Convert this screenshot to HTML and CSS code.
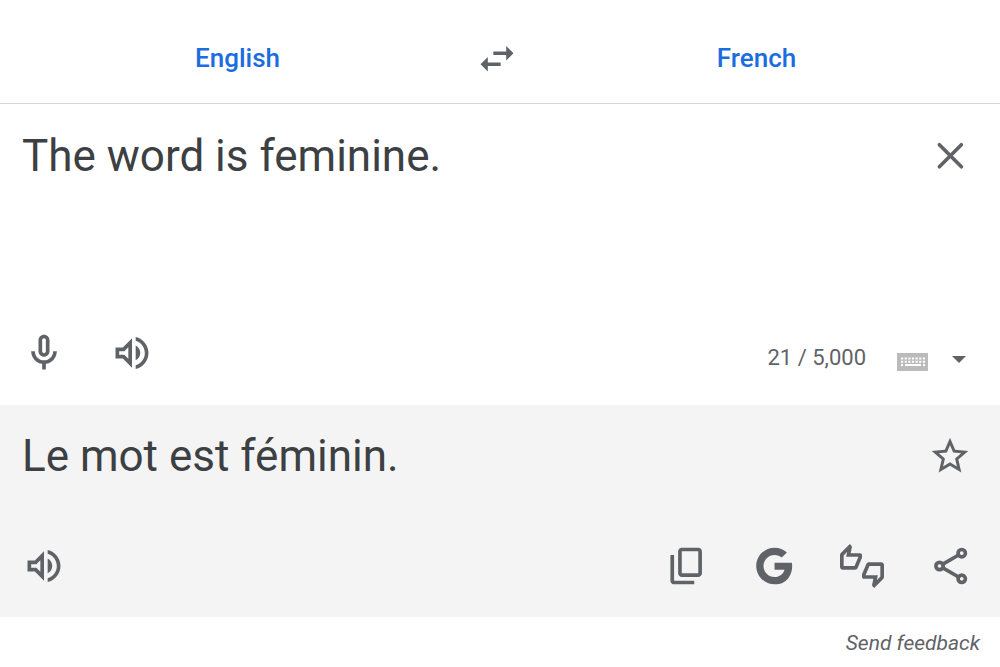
FILE: index.html
```html
<!DOCTYPE html>
<html lang="en">
<head>
  <meta charset="UTF-8">
  <meta name="viewport" content="width=device-width, initial-scale=1.0">
  <title>Translate</title>
  <link rel="stylesheet" href="styles.css">
</head>
<body>
  <header class="languages">
    <button class="language" type="button">English</button>
    <button class="icon-button" type="button" aria-label="Swap languages">
      <svg class="icon" viewBox="0 0 24 24"><path d="M6.99 11.4L3 15.4l3.99 4v-3H14v-2H6.99v-3zM21 9.4l-3.99-4v3H10v2h7.01v3L21 9.4z"/></svg>
    </button>
    <button class="language" type="button">French</button>
  </header>

  <main>
    <section class="panel source">
      <div class="text-row">
        <textarea class="text" rows="3" aria-label="Source text" spellcheck="false">The word is feminine.</textarea>
        <button class="icon-button" type="button" aria-label="Clear source text">
          <svg class="icon" viewBox="0 0 24 24"><path class="line" d="M6.2 5.9l12 12M18.2 5.9l-12 12"/></svg>
        </button>
      </div>
      <div class="tools">
        <button class="icon-button" type="button" aria-label="Translate by voice">
          <svg class="icon" viewBox="0 0 24 24"><path d="M12 14c1.66 0 3-1.34 3-3V5c0-1.66-1.34-3-3-3S9 3.34 9 5v6c0 1.66 1.34 3 3 3zm-1-9c0-.55.45-1 1-1s1 .45 1 1v6c0 .55-.45 1-1 1s-1-.45-1-1V5zm6 6c0 2.76-2.24 5-5 5s-5-2.24-5-5H5c0 3.53 2.61 6.43 6 6.92V21h2v-3.08c3.39-.49 6-3.39 6-6.92h-2z"/></svg>
        </button>
        <button class="icon-button" type="button" aria-label="Listen to source text">
          <svg class="icon" viewBox="0 0 24 24"><path d="M3 9v6h4l5 5V4L7 9H3zm7-.17v6.34L7.83 13H5v-2h2.83L10 8.83zM14 3.23v2.06c2.89.86 5 3.54 5 6.71s-2.11 5.85-5 6.71v2.06c4.01-.91 7-4.49 7-8.77s-2.99-7.86-7-8.77zM16.5 12c0-1.77-1.02-3.29-2.5-4.03v8.05c1.48-.73 2.5-2.25 2.5-4.02z"/></svg>
        </button>
        <div class="input-info">
          <span class="counter">21 / 5,000</span>
          <button class="keyboard" type="button" aria-label="Turn on virtual keyboard">
            <svg class="keyboard-icon" viewBox="0 0 31 18">
              <path class="keyboard-case" d="M0 0h31v18H0z"/>
              <path class="keys" d="M4 5.5h24M4 8.7h24"/>
              <path class="space" d="M4 12h2M8 12h16M26 12h2"/>
            </svg>
          </button>
          <button class="keyboard-menu" type="button" aria-label="Select input tool">
            <svg class="arrow-icon" viewBox="0 0 14 7"><path d="M0 0h14L7 7z"/></svg>
          </button>
        </div>
      </div>
    </section>

    <section class="panel result">
      <div class="text-row">
        <p class="text" lang="fr">Le mot est féminin.</p>
        <button class="icon-button" type="button" aria-label="Save translation">
          <svg class="icon" viewBox="0 0 24 24"><path d="M22 9.24l-7.19-.62L12 2 9.19 8.63 2 9.24l5.46 4.73L5.82 21 12 17.27 18.18 21l-1.63-7.03L22 9.24zM12 15.4l-3.76 2.27 1-4.28-3.32-2.88 4.38-.38L12 6.1l1.71 4.04 4.38.38-3.32 2.88 1 4.28L12 15.4z"/></svg>
        </button>
      </div>
      <div class="tools">
        <button class="icon-button" type="button" aria-label="Listen to translation">
          <svg class="icon" viewBox="0 0 24 24"><path d="M3 9v6h4l5 5V4L7 9H3zm7-.17v6.34L7.83 13H5v-2h2.83L10 8.83zM14 3.23v2.06c2.89.86 5 3.54 5 6.71s-2.11 5.85-5 6.71v2.06c4.01-.91 7-4.49 7-8.77s-2.99-7.86-7-8.77zM16.5 12c0-1.77-1.02-3.29-2.5-4.03v8.05c1.48-.73 2.5-2.25 2.5-4.02z"/></svg>
        </button>
        <div class="actions">
          <button class="icon-button" type="button" aria-label="Copy translation">
            <svg class="icon" viewBox="0 0 24 24"><path d="M18.7 2H9.7c-1.1 0-2 .9-2 2v12c0 1.1.9 2 2 2h9c1.1 0 2-.9 2-2V4c0-1.1-.9-2-2-2zm0 14H9.7V4h9v12zM3.5 6v14c0 1.1.9 2 2 2h11v-2h-11V6h-2z"/></svg>
          </button>
          <button class="icon-button" type="button" aria-label="Search with Google">
            <svg class="icon" viewBox="0 0 24 24"><path d="M12.3 10.24v3.82h5.45c-.72 2.31-2.65 3.97-5.45 3.97-3.33 0-6.03-2.7-6.03-6.03s2.7-6.03 6.03-6.03c1.5 0 2.87.55 3.92 1.45l2.82-2.81C17.26 2.99 14.9 2 12.3 2 6.78 2 2.3 6.48 2.3 12s4.48 10 10 10c8.4 0 10.25-7.85 9.43-11.75z"/></svg>
          </button>
          <button class="icon-button" type="button" aria-label="Rate this translation">
            <svg class="icon" viewBox="0 0 24 24"><path d="M12 6c0-.55-.45-1-1-1H5.82l.66-3.18.02-.23c0-.31-.13-.59-.33-.8L5.38 0 .44 4.94C.17 5.21 0 5.59 0 6v6.5c0 .83.67 1.5 1.5 1.5h6.75c.62 0 1.15-.38 1.38-.91l2.26-5.29c.07-.17.11-.36.11-.55V6zm-2 1.13L7.92 12H2V6.21l1.93-1.93L3.36 7H10v.13zM22.5 10h-6.75c-.62 0-1.15.38-1.38.91l-2.26 5.29c-.07.17-.11.36-.11.55V18c0 .55.45 1 1 1h5.18l-.66 3.18-.02.24c0 .31.13.59.33.8l.79.78 4.94-4.94c.27-.27.44-.65.44-1.06v-6.5c0-.83-.67-1.5-1.5-1.5zm-.5 7.79l-1.93 1.93.57-2.72H14v-.13L16.08 12H22v5.79z"/></svg>
          </button>
          <button class="icon-button" type="button" aria-label="Share translation">
            <svg class="icon" viewBox="0 0 24 24"><path class="line" d="M8.1 11l8.6-5M8.1 13l8.6 5"/><g class="nodes"><circle cx="6.3" cy="12" r="2"/><circle cx="18.4" cy="5" r="2"/><circle cx="18.4" cy="19" r="2"/></g></svg>
          </button>
        </div>
      </div>
    </section>
  </main>

  <footer class="footer">
    <a class="feedback" href="#">Send feedback</a>
  </footer>
</body>
</html>
```
FILE: styles.css
```css
body {
  margin: 0;
  background: #fff;
  color: #3c4043;
  font-family: Roboto, "Liberation Sans", sans-serif;
}
button {
  padding: 0;
  border: none;
  background: none;
  color: #5f6368;
  font-family: inherit;
  cursor: pointer;
}
svg {
  display: block;
  fill: currentColor;
}
.languages {
  display: grid;
  grid-template-columns: 1fr 44px 1fr;
  align-items: center;
  padding: 36px 6px 23px 0;
  border-bottom: 1px solid #d4d5d7;
}
.language {
  justify-self: center;
  color: #1a6ce0;
  font-size: 26px;
  line-height: 44px;
  font-weight: 500;
}
.icon-button {
  flex: none;
  width: 44px;
  height: 44px;
}
.icon {
  width: 44px;
  height: 44px;
}
.line {
  fill: none;
  stroke: currentColor;
  stroke-width: 2;
  stroke-linecap: round;
}
.nodes {
  fill: none;
  stroke: currentColor;
  stroke-width: 2;
}
.panel {
  padding: 26px 28px 30px 22px;
}
.text-row {
  display: flex;
  align-items: flex-start;
  gap: 44px;
}
.text-row .icon-button {
  margin-top: 4px;
}
.text {
  flex: 1;
  min-width: 0;
  margin: 0;
  padding: 0;
  border: none;
  outline: none;
  resize: none;
  background: none;
  color: inherit;
  font-family: inherit;
  font-size: 44px;
  line-height: 52px;
}
.tools {
  display: flex;
  align-items: center;
  gap: 44px;
}
.source .tools {
  margin-top: 45px;
}
.result {
  padding-top: 25px;
  padding-bottom: 29px;
  background: #f4f4f4;
}
.result .tools {
  margin-top: 62px;
}
.input-info {
  display: flex;
  align-items: center;
  margin: 8px 6px 0 auto;
}
.counter {
  margin-top: 2px;
  color: #5f6368;
  font-size: 22px;
  line-height: 26px;
}
.keyboard {
  margin: 10px 24px 0 31px;
}
.keyboard-icon {
  width: 31px;
  height: 18px;
}
.keyboard-case {
  fill: #bbb;
}
.keys {
  stroke: #fff;
  stroke-width: 2;
  stroke-dasharray: 2.2 1.43;
}
.space {
  stroke: #fff;
  stroke-width: 2;
}
.keyboard-menu {
  margin-top: 4px;
}
.arrow-icon {
  width: 14px;
  height: 7px;
}
.actions {
  display: flex;
  gap: 44px;
  margin-left: auto;
}
.footer {
  padding: 14px 20px;
  text-align: right;
}
.feedback {
  color: #5f6368;
  font-size: 21px;
  line-height: 24px;
  font-style: italic;
  text-decoration: none;
}
```
